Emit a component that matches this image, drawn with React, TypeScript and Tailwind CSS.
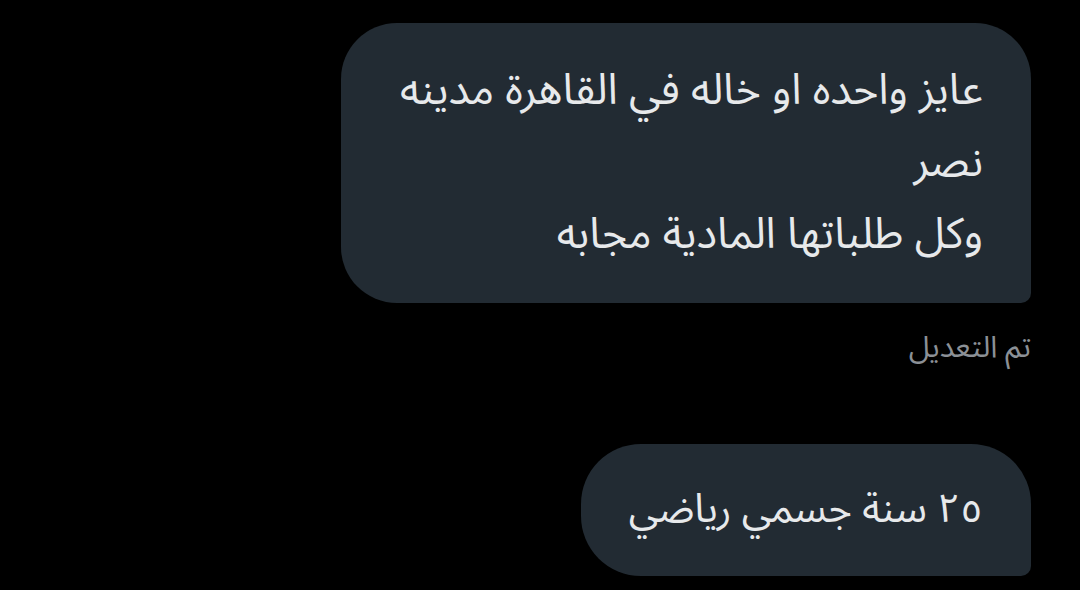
export default function App() {
  const font = { fontFamily: '"Noto Sans Arabic", "DejaVu Sans", "Noto Sans", sans-serif' };
  return (
    <div className="min-h-[590px] w-full bg-black pr-[49px] pt-[23px]" dir="rtl" style={font}>
      <div className="flex flex-col items-start">
        {/* first message */}
        <div className="w-[690px] rounded-[56px] rounded-br-[10px] bg-[#222b33] px-[48px] py-[32px] text-[43px] leading-[72px] text-[#e7e9eb]">
          عايز واحده او خاله في القاهرة مدينه نصر
          <br />
          وكل طلباتها المادية مجابه
        </div>
        <div className="mt-[27px] text-[30px] leading-[36px] text-[#8b9096]">تم التعديل</div>

        {/* second message */}
        <div className="mt-[78px] rounded-[60px] rounded-br-[10px] bg-[#222b33] px-[48px] py-[30px] text-[40px] leading-[72px] text-[#e7e9eb]">
          ٢٥ سنة جسمي رياضي
        </div>
      </div>
    </div>
  );
}
